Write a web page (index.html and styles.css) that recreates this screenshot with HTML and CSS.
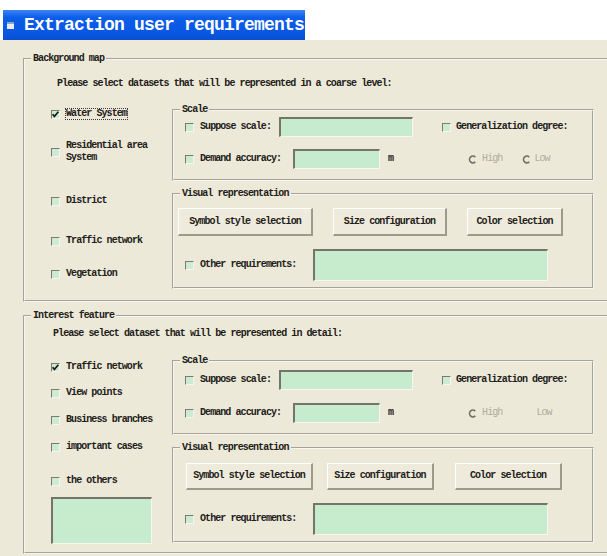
FILE: index.html
```html
<!DOCTYPE html>
<html lang="en">
<head>
<meta charset="utf-8">
<title>Extraction user requirements</title>
<link rel="stylesheet" href="styles.css">
</head>
<body>
<div class="titlebar">
  <span class="app-icon"></span>
  <span class="title">Extraction user requirements</span>
</div>

<div class="window">

  <!-- Datasets shown at a coarse level -->
  <fieldset class="group outer first">
    <legend>Background map</legend>
    <p class="hint hint-first">Please select datasets that will be represented in a coarse level:</p>
    <div class="columns">
      <div class="datasets sets-coarse">
        <label class="check">
          <span class="box checked"><svg viewBox="0 0 9 9" width="9" height="9"><polyline points="1.6,4.2 3.4,6.4 7.4,1.8" fill="none" stroke="#1b1b1b" stroke-width="1.7"/></svg></span>
          <span class="focus">Water System</span>
        </label>
        <label class="check"><span class="box"></span><span>Residential area<br>System</span></label>
        <label class="check"><span class="box"></span><span>District</span></label>
        <label class="check"><span class="box"></span><span>Traffic network</span></label>
        <label class="check"><span class="box"></span><span>Vegetation</span></label>
      </div>

      <div class="settings settings-first">
        <fieldset class="group sub scale scale-first">
          <legend>Scale</legend>
          <div class="row">
            <label class="check lbl-suppose"><span class="box"></span><span>Suppose scale:</span></label>
            <input class="field field-scale" type="text">
            <label class="check lbl-gen"><span class="box"></span><span>Generalization degree:</span></label>
          </div>
          <div class="row row-second">
            <label class="check lbl-demand"><span class="box"></span><span>Demand accuracy:</span></label>
            <input class="field field-accuracy" type="text">
            <span class="unit">m</span>
            <span class="radio radio-high"><svg viewBox="0 0 9 9" width="9" height="9"><path d="M7.3 2.1 A3.4 3.4 0 1 0 7.3 6.9" fill="none" stroke="#6f6e68" stroke-width="1.5"/></svg>High</span>
            <span class="radio radio-low"><svg viewBox="0 0 9 9" width="9" height="9"><path d="M7.3 2.1 A3.4 3.4 0 1 0 7.3 6.9" fill="none" stroke="#6f6e68" stroke-width="1.5"/></svg>Low</span>
          </div>
        </fieldset>

        <fieldset class="group sub visual visual-first">
          <legend>Visual representation</legend>
          <div class="buttons">
            <button class="btn btn-symbol" type="button">Symbol style selection</button>
            <button class="btn btn-size" type="button">Size configuration</button>
            <button class="btn btn-color" type="button">Color selection</button>
          </div>
          <div class="row row-other">
            <label class="check lbl-other"><span class="box"></span><span>Other requirements:</span></label>
            <textarea class="field field-other"></textarea>
          </div>
        </fieldset>
      </div>
    </div>
  </fieldset>

  <!-- Datasets shown in detail -->
  <fieldset class="group outer second">
    <legend>Interest feature</legend>
    <p class="hint hint-second">Please select dataset that will be represented in detail:</p>
    <div class="columns">
      <div class="datasets sets-detail">
        <label class="check">
          <span class="box checked"><svg viewBox="0 0 9 9" width="9" height="9"><polyline points="1.6,4.2 3.4,6.4 7.4,1.8" fill="none" stroke="#1b1b1b" stroke-width="1.7"/></svg></span>
          <span>Traffic network</span>
        </label>
        <label class="check"><span class="box"></span><span>View points</span></label>
        <label class="check"><span class="box"></span><span>Business branches</span></label>
        <label class="check"><span class="box"></span><span>important cases</span></label>
        <label class="check"><span class="box"></span><span>the others</span></label>
        <textarea class="field field-others"></textarea>
      </div>

      <div class="settings settings-second">
        <fieldset class="group sub scale scale-second">
          <legend>Scale</legend>
          <div class="row">
            <label class="check lbl-suppose"><span class="box"></span><span>Suppose scale:</span></label>
            <input class="field field-scale" type="text">
            <label class="check lbl-gen"><span class="box"></span><span>Generalization degree:</span></label>
          </div>
          <div class="row row-second">
            <label class="check lbl-demand"><span class="box"></span><span>Demand accuracy:</span></label>
            <input class="field field-accuracy" type="text">
            <span class="unit">m</span>
            <span class="radio radio-high"><svg viewBox="0 0 9 9" width="9" height="9"><path d="M7.3 2.1 A3.4 3.4 0 1 0 7.3 6.9" fill="none" stroke="#6f6e68" stroke-width="1.5"/></svg>High</span>
            <span class="radio radio-low bare">Low</span>
          </div>
        </fieldset>

        <fieldset class="group sub visual visual-second">
          <legend>Visual representation</legend>
          <div class="buttons">
            <button class="btn btn-symbol" type="button">Symbol style selection</button>
            <button class="btn btn-size" type="button">Size configuration</button>
            <button class="btn btn-color" type="button">Color selection</button>
          </div>
          <div class="row row-other">
            <label class="check lbl-other"><span class="box"></span><span>Other requirements:</span></label>
            <textarea class="field field-other"></textarea>
          </div>
        </fieldset>
      </div>
    </div>
  </fieldset>

</div>
</body>
</html>
```

FILE: styles.css
```css
* { box-sizing: border-box; }

html, body { margin: 0; }

body {
  width: 607px;
  height: 556px;
  overflow: hidden;
  background: #ffffff;
  color: #222018;
  font-family: "Liberation Mono", "DejaVu Sans Mono", monospace;
  font-weight: bold;
  font-size: 10px;
  line-height: 12px;
  letter-spacing: -0.93px;
}

/* ---------- title bar ---------- */
.titlebar {
  margin: 10px 0 0 3px;
  width: 302px;
  height: 30px;
  display: flex;
  align-items: center;
  overflow: hidden;
  white-space: nowrap;
  background: linear-gradient(#3a84f2 0%, #0c5de8 25%, #0957e2 75%, #0a4fd0 100%);
}

.app-icon {
  flex: none;
  width: 7px;
  height: 7px;
  margin-left: 4px;
  background: #e9ecf2;
  border-top: 2px solid #8fa3c4;
}

.title {
  flex: none;
  margin-left: 10px;
  color: #ffffff;
  font-size: 18px;
  line-height: 20px;
  letter-spacing: -0.8px;
}

/* ---------- dialog body ---------- */
.window {
  height: 516px;
  padding-top: 13px;
  background: #ece9d8;
  overflow: hidden;
}

.group {
  margin: 0;
  padding: 0;
  min-width: 0;
  border: 2px groove #f7f5ee;
}

legend {
  margin-left: 6px;
  padding: 0 2px;
  line-height: 12px;
}

.outer {
  width: 600px;
  margin-left: 23px;
}

.outer.first { padding-bottom: 11px; }
.outer.second { margin-top: 8px; padding-bottom: 8px; }

.hint { margin: 0; }
.hint-first { margin: 13px 0 0 32px; }
.hint-second { margin: 6px 0 0 28px; }

.columns {
  display: grid;
  grid-template-columns: 147px 422px;
}

/* ---------- dataset check lists ---------- */
.datasets {
  display: grid;
  align-items: start;
  padding-left: 26px;
}

.sets-coarse {
  padding-top: 14px;
  grid-template-rows: 36px 51px 40px 33px 20px;
}

.sets-detail {
  padding-top: 17px;
  grid-template-rows: 26px 27px 27px 34px 26px 47px;
}

.check {
  display: flex;
  align-items: center;
  gap: 6px;
  min-height: 20px;
  white-space: nowrap;
}

.box {
  flex: none;
  width: 9px;
  height: 9px;
  background: #cdebd2;
  border-top: 1px solid #7c7a6e;
  border-left: 1px solid #7c7a6e;
  border-right: 1px solid #f6f5ef;
  border-bottom: 1px solid #f6f5ef;
  position: relative;
}

.box svg {
  position: absolute;
  left: -1px;
  top: -1px;
}

.focus {
  outline: 1px dotted #3a3a3a;
  outline-offset: -1px;
  padding: 0 1px;
  margin-left: -1px;
}

/* ---------- inputs ---------- */
.field {
  display: block;
  margin: 0;
  padding: 0;
  resize: none;
  font: inherit;
  background: #c6ebcd;
  border-top: 2px solid #75746a;
  border-left: 2px solid #75746a;
  border-right: 1px solid #f7f6f0;
  border-bottom: 1px solid #f7f6f0;
  outline: none;
}

.field-scale { width: 134px; height: 20px; }
.field-accuracy { width: 87px; height: 20px; }
.field-other { width: 235px; height: 32px; }
.field-others { width: 101px; height: 47px; }

/* ---------- right-hand settings ---------- */
.settings-first { padding-top: 14px; }
.settings-second { padding-top: 15px; }

.sub { width: 422px; }

.row {
  display: flex;
  align-items: center;
  height: 20px;
}

.lbl-suppose, .lbl-demand, .lbl-other { margin-left: 11px; }
.lbl-suppose { width: 94px; }
.lbl-demand { width: 108px; }
.lbl-other { width: 128px; }
.lbl-gen { margin-left: 29px; gap: 5px; }

.unit { margin-left: 8px; }

.radio {
  display: flex;
  align-items: center;
  gap: 5px;
  color: #b0ad9c;
  font-weight: normal;
}

.radio svg { flex: none; }
.radio-high { margin-left: 75px; }
.radio-low { margin-left: 20px; gap: 3px; }
.radio-low.bare { margin-left: 34px; }

.scale-first { padding: 1px 0 10px; }
.scale-first .row-second { margin-top: 12px; }

.scale-second { padding: 3px 0 10px; }
.scale-second .row-second { margin-top: 13px; }

.visual-first { margin-top: 7px; padding-bottom: 6px; }
.visual-second { margin-top: 7px; padding-bottom: 6px; }

.buttons {
  display: flex;
  padding-top: 9px;
}

.visual-first .buttons { padding-top: 8px; }

.btn {
  flex: none;
  margin: 0;
  padding: 0;
  font: inherit;
  letter-spacing: inherit;
  white-space: nowrap;
  color: inherit;
  background: #eeebdd;
  border-top: 1px solid #ffffff;
  border-left: 1px solid #ffffff;
  border-right: 2px solid #9d9a8c;
  border-bottom: 2px solid #9d9a8c;
  text-align: center;
}

.visual-first .btn { height: 28px; }
.visual-first .btn-symbol { width: 135px; margin-left: 4px; }
.visual-first .btn-size { width: 114px; margin-left: 20px; }
.visual-first .btn-color { width: 96px; margin-left: 20px; }

.visual-second .btn { height: 27px; }
.visual-second .btn-symbol { width: 127px; margin-left: 12px; }
.visual-second .btn-size { width: 107px; margin-left: 14px; }
.visual-second .btn-color { width: 107px; margin-left: 21px; }

.row-other {
  height: 32px;
  margin-top: 13px;
}
```
